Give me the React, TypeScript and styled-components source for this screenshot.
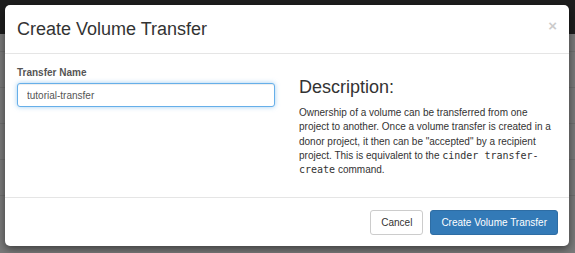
import styled, { createGlobalStyle } from "styled-components";

const GlobalStyle = createGlobalStyle`
  html, body {
    margin: 0;
    padding: 0;
  }
  body {
    font-family: "Liberation Sans", Arial, Helvetica, sans-serif;
    color: #333;
  }
  * {
    box-sizing: border-box;
  }
`;

// dimmed page behind the dialog
const Page = styled.div`
  position: relative;
  width: 575px;
  height: 253px;
  overflow: hidden;
  display: flex;
  flex-direction: column;
  background: #7a7a7a;
`;

const Navbar = styled.div`
  height: 34px;
  background: #1e1e1e;
`;

const Content = styled.div`
  flex: 1;
  display: flex;
  flex-direction: column;
`;

const BgRow = styled.div<{ $h: number }>`
  height: ${(p) => p.$h}px;
  border-bottom: 1px solid #6f6f6f;
`;

const Modal = styled.div`
  position: absolute;
  top: 5px;
  left: 5px;
  width: 564px;
  height: 241px;
  background: #fff;
  border-radius: 5px;
  box-shadow: 0 3px 9px rgba(0, 0, 0, 0.5);
  display: flex;
  flex-direction: column;
`;

const Header = styled.div`
  height: 49px;
  padding: 0 12px;
  display: flex;
  align-items: center;
  justify-content: space-between;
  border-bottom: 1px solid #e5e5e5;
`;

const Title = styled.h4`
  margin: 0;
  font-size: 18px;
  font-weight: normal;
  line-height: 22px;
  color: #333;
`;

const Close = styled.span`
  font-size: 15px;
  font-weight: bold;
  line-height: 1;
  color: #000;
  opacity: 0.2;
  margin-right: 0;
  margin-top: -8px;
`;

const Body = styled.div`
  flex: 1;
  padding: 12px 12px 0;
  display: grid;
  grid-template-columns: 258px 258px;
  column-gap: 24px;
  align-content: start;
`;

const Field = styled.div`
  display: flex;
  flex-direction: column;
`;

const Label = styled.label`
  font-size: 10px;
  font-weight: bold;
  line-height: 14px;
  color: #555;
  margin-bottom: 3px;
`;

const Input = styled.input`
  height: 24px;
  padding: 0 9px;
  font-family: inherit;
  font-size: 10px;
  color: #555;
  border: 1px solid #66afe9;
  border-radius: 3px;
  outline: none;
  box-shadow: inset 0 1px 1px rgba(0, 0, 0, 0.075), 0 0 5px rgba(102, 175, 233, 0.6);
`;

const Side = styled.div`
  padding-top: 10px;
`;

const SideTitle = styled.h3`
  margin: 0 0 8px;
  font-size: 18px;
  font-weight: normal;
  line-height: 22px;
  color: #333;
`;

const Text = styled.p`
  margin: 0;
  font-size: 10px;
  line-height: 14.3px;
  color: #333;
`;

const Code = styled.code`
  font-family: "DejaVu Sans Mono", monospace;
  font-size: 10px;
  line-height: 1;
  color: #333;
`;

const Footer = styled.div`
  height: 49px;
  padding: 0 11px;
  border-top: 1px solid #e5e5e5;
  display: flex;
  align-items: center;
  justify-content: flex-end;
  gap: 7px;
`;

const Button = styled.button<{ $primary?: boolean }>`
  height: 25px;
  padding: 0 10px;
  font-family: inherit;
  font-size: 10px;
  border-radius: 3px;
  border: 1px solid ${(p) => (p.$primary ? "#2e6da4" : "#ccc")};
  background: ${(p) => (p.$primary ? "#337ab7" : "#fff")};
  color: ${(p) => (p.$primary ? "#fff" : "#333")};
  cursor: pointer;
`;

export default function App() {
  return (
    <>
      <GlobalStyle />
      <Page>
        <Navbar />
        <Content>
          <BgRow $h={18} />
          <BgRow $h={36} />
          <BgRow $h={36} />
          <BgRow $h={36} />
          <BgRow $h={36} />
        </Content>
        <Modal>
          <Header>
            <Title>Create Volume Transfer</Title>
            <Close>×</Close>
          </Header>
          <Body>
            <Field>
              <Label>Transfer Name</Label>
              <Input defaultValue="tutorial-transfer" />
            </Field>
            <Side>
              <SideTitle>Description:</SideTitle>
              <Text>
                Ownership of a volume can be transferred from one project to
                another. Once a volume transfer is created in a donor project,
                it then can be "accepted" by a recipient project. This is
                equivalent to the <Code>cinder transfer-create</Code> command.
              </Text>
            </Side>
          </Body>
          <Footer>
            <Button>Cancel</Button>
            <Button $primary>Create Volume Transfer</Button>
          </Footer>
        </Modal>
      </Page>
    </>
  );
}
